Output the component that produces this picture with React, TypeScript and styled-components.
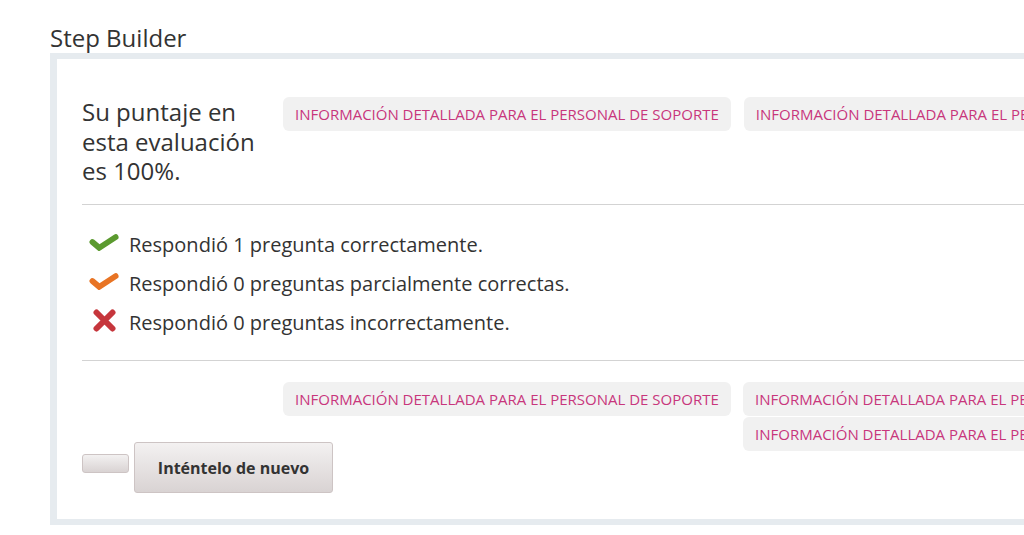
import styled, {createGlobalStyle} from 'styled-components';

const GlobalStyle = createGlobalStyle`
    html, body {
        margin: 0;
        padding: 0;
        overflow: hidden;
        background: #fff;
        font-family: "Open Sans", "Liberation Sans", sans-serif;
        color: #333;
    }
`;

const Page = styled.div`
    padding: 23px 0 0 50px;
`;

const Title = styled.h2`
    margin: 0;
    font-size: 24px;
    font-weight: 400;
    line-height: 30px;
    color: #333;
`;

const Frame = styled.div`
    width: 1300px;
    border: 6px solid #e6ebef;
    border-left-width: 7px;
    border-right: none;
    padding: 38px 0 26px 25px;
    background: #fff;
`;

const ScoreRow = styled.div`
    display: flex;
    align-items: flex-start;
`;

const Score = styled.p`
    width: 180px;
    margin: 0 21px 0 0;
    flex-shrink: 0;
    font-size: 24px;
    line-height: 29.7px;
    color: #333;
`;

const Spacer = styled.div`
    width: 201px;
    flex-shrink: 0;
`;

const Pill = styled.button`
    flex-shrink: 0;
    height: 34px;
    padding: 0 12px;
    border: none;
    border-radius: 6px;
    background: #f1f1f1;
    color: #c8367c;
    font-family: "Open Sans", "Liberation Sans", sans-serif;
    font-size: 15px;
    white-space: nowrap;
    text-transform: uppercase;
    margin-right: ${(props) => props.$gap ?? 0}px;
`;

const Divider = styled.hr`
    margin: ${(props) => props.$top}px 0 0;
    border: none;
    border-top: 1px solid #d3d3d3;
`;

const Results = styled.ul`
    list-style: none;
    margin: 0;
    padding: 20px 0 18px;
`;

const ResultItem = styled.li`
    display: flex;
    align-items: center;
    height: 39px;
    font-size: 20px;
    color: #333;
`;

const IconBox = styled.span`
    width: 30px;
    margin: 0 10px 5px 7px;
    display: flex;
    justify-content: center;
    align-items: center;
`;

const Bottom = styled.div`
    display: flex;
    align-items: flex-start;
    margin-top: 21px;
`;

const LeftColumn = styled.div`
    display: flex;
    flex-direction: column;
    width: 661px;
    flex-shrink: 0;
`;

const PillStack = styled.div`
    display: flex;
    flex-direction: column;
    gap: 1px;
`;

const Actions = styled.div`
    display: flex;
    align-items: flex-start;
    gap: 5px;
    margin-top: 26px;
`;

const GreyButton = styled.button`
    background: linear-gradient(#f3f1f1, #d9d3d3);
    border: 1px solid #cdc4c4;
    border-radius: 3px;
    font-family: "Open Sans", "Liberation Sans", sans-serif;
    color: #333;
`;

const EmptyButton = styled(GreyButton)`
    width: 47px;
    height: 19px;
    margin-top: 12px;
`;

const RetryButton = styled(GreyButton)`
    width: 199px;
    height: 51px;
    font-size: 16px;
    font-weight: 700;
`;

const Check = ({color}: {color: string}) => (
    <svg width="31" height="17" viewBox="0 0 31 17">
      <polyline points="3.5,8 10.5,14 27.5,3" fill="none" stroke={color} strokeWidth="6"
                strokeLinejoin="miter" strokeLinecap="round"/>
    </svg>
);

const Cross = () => (
    <svg width="23" height="23" viewBox="0 0 23 23">
      <path d="M3.5 3.5 L19.5 19.5 M19.5 3.5 L3.5 19.5" fill="none" stroke="#c6363c" strokeWidth="6"
            strokeLinecap="round"/>
    </svg>
);

const INFO = 'Información detallada para el personal de soporte';

const App = () => (
    <Page>
      <GlobalStyle/>
      <Title>Step Builder</Title>
      <Frame>
        <ScoreRow>
          <Score>Su puntaje en esta evaluación es 100%.</Score>
          <Pill $gap={13}>{INFO}</Pill>
          <Pill>{INFO}</Pill>
        </ScoreRow>
        <Divider $top={18}/>
        <Results>
          <ResultItem>
            <IconBox><Check color="#5b9a2f"/></IconBox>
            Respondió 1 pregunta correctamente.
          </ResultItem>
          <ResultItem>
            <IconBox><Check color="#e87424"/></IconBox>
            Respondió 0 preguntas parcialmente correctas.
          </ResultItem>
          <ResultItem>
            <IconBox><Cross/></IconBox>
            Respondió 0 preguntas incorrectamente.
          </ResultItem>
        </Results>
        <Divider $top={0}/>
        <Bottom>
          <LeftColumn>
            <ScoreRow>
              <Spacer/>
              <Pill>{INFO}</Pill>
            </ScoreRow>
            <Actions>
              <EmptyButton/>
              <RetryButton>Inténtelo de nuevo</RetryButton>
            </Actions>
          </LeftColumn>
          <PillStack>
            <Pill>{INFO}</Pill>
            <Pill>{INFO}</Pill>
          </PillStack>
        </Bottom>
      </Frame>
    </Page>
);

export default App;
